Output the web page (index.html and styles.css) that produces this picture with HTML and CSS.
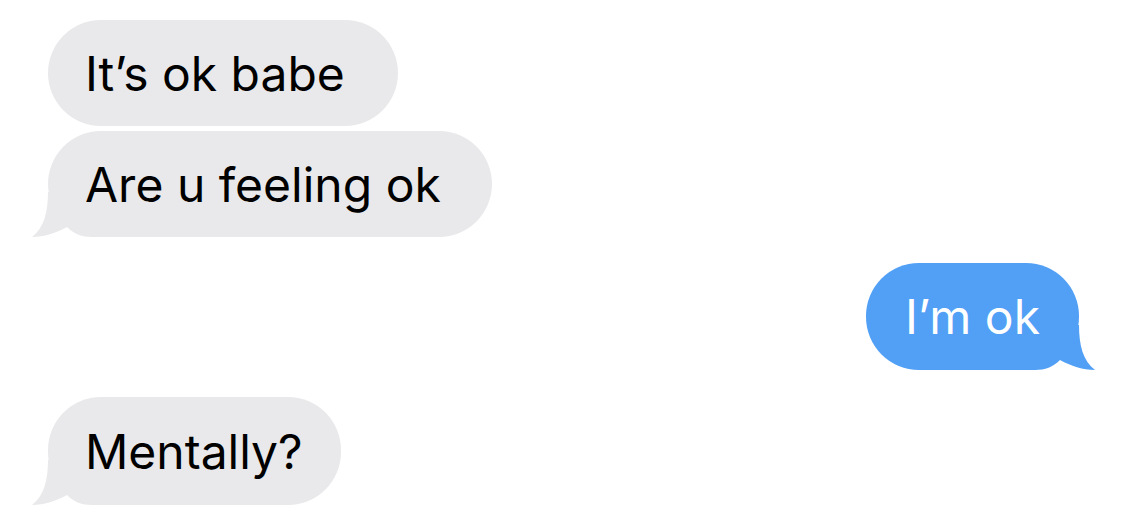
FILE: index.html
```html
<!DOCTYPE html>
<html>
<head>
<meta charset="utf-8">
<link rel="stylesheet" href="styles.css">
</head>
<body>
<div class="thread">
  <div class="bubble in first"><span class="text">It’s ok babe</span></div>
  <div class="bubble in last wide"><span class="text">Are u feeling ok</span>
    <svg class="tail tail-in" viewBox="0 0 70 45" width="70" height="45"><path d="M16,0 C16,20 12,36 0,45 C12,45 24,41 35,35 C42,42 50,45 60,45 L70,45 L70,0 Z"/></svg>
  </div>
  <div class="bubble out"><span class="text">I’m ok</span>
    <svg class="tail tail-out" viewBox="0 0 70 45" width="70" height="45"><path d="M54,0 C54,20 58,36 70,45 C58,45 46,41 35,35 C28,42 20,45 10,45 L0,45 L0,0 Z"/></svg>
  </div>
  <div class="bubble in last"><span class="text">Mentally?</span>
    <svg class="tail tail-in" viewBox="0 0 70 45" width="70" height="45"><path d="M16,0 C16,20 12,36 0,45 C12,45 24,41 35,35 C42,42 50,45 60,45 L70,45 L70,0 Z"/></svg>
  </div>
</div>
</body>
</html>
```
FILE: styles.css
```css
html, body {
  margin: 0;
  padding: 0;
  background: #ffffff;
}
body {
  font-family: "Inter", "Liberation Sans", sans-serif;
}
.thread {
  display: flex;
  flex-direction: column;
  padding: 20px 46px 0 48px;
}
.bubble {
  position: relative;
  box-sizing: border-box;
  height: 106px;
  display: flex;
  align-items: center;
  padding: 0 53px 0 37px;
  border-radius: 53px;
  font-size: 48px;
  letter-spacing: 0;
  align-self: flex-start;
}
.text {
  position: relative;
  z-index: 1;
}
.bubble.in {
  background: #e9e9eb;
  color: #000000;
  fill: #e9e9eb;
}
.bubble.first {
  margin-bottom: 5px;
}
.bubble.wide {
  margin-bottom: 26px;
  padding-right: 51px;
}
.bubble.out {
  align-self: flex-end;
  background: #51a0f6;
  color: #ffffff;
  fill: #51a0f6;
  padding: 0 39px;
  height: 107px;
  margin-bottom: 27px;
}
.bubble.in.last:not(.wide) {
  padding-right: 38px;
  height: 108px;
}
.tail {
  position: absolute;
  bottom: 0;
  display: block;
  z-index: 0;
}
.tail-in {
  left: -16px;
}
.tail-out {
  right: -16px;
}
```
